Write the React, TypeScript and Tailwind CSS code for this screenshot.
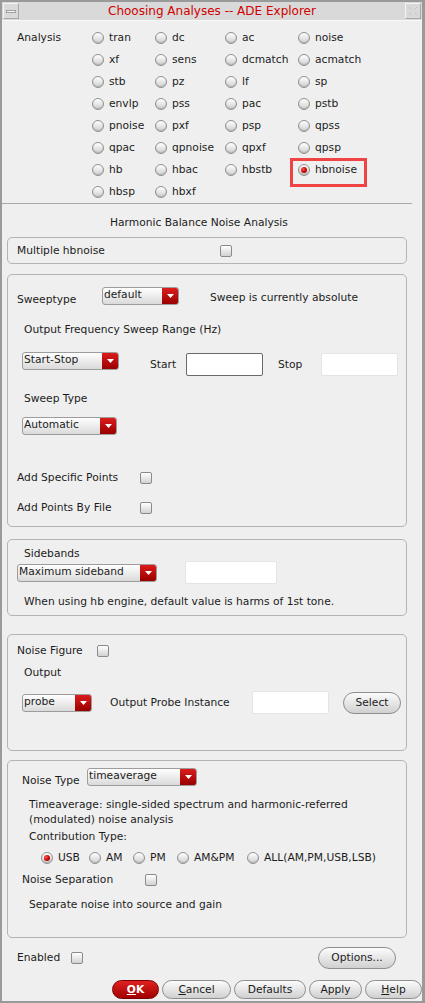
import React from 'react';

const rows: string[][] = [
  ['tran', 'dc', 'ac', 'noise'],
  ['xf', 'sens', 'dcmatch', 'acmatch'],
  ['stb', 'pz', 'lf', 'sp'],
  ['envlp', 'pss', 'pac', 'pstb'],
  ['pnoise', 'pxf', 'psp', 'qpss'],
  ['qpac', 'qpnoise', 'qpxf', 'qpsp'],
  ['hb', 'hbac', 'hbstb', 'hbnoise'],
  ['hbsp', 'hbxf'],
];

function Radio({ on }: { on?: boolean }) {
  return (
    <span className="inline-flex h-[12px] w-[12px] shrink-0 items-center justify-center rounded-full border border-[#909090] bg-linear-to-b from-white to-[#cfcfcf] shadow-[inset_0_-1px_1px_rgba(0,0,0,0.15)]">
      {on && <span className="h-[6px] w-[6px] rounded-full bg-[radial-gradient(circle_at_35%_35%,#ff5a5a,#c80000_55%,#780000)]" />}
    </span>
  );
}

function Check() {
  return <span className="inline-block h-[12px] w-[12px] shrink-0 rounded-[2px] border border-[#8a8a8a] bg-linear-to-b from-white to-[#d2d2d2]" />;
}

function Drop({ label, className }: { label: string; className: string }) {
  return (
    <div className={`flex h-[18px] shrink-0 overflow-hidden rounded-[3px] border border-[#9c9c9c] bg-linear-to-b from-white to-[#dadada] ${className}`}>
      <span className="flex-1 pl-[1px] leading-[14px]">{label}</span>
      <span className="flex w-[16px] items-center justify-center bg-linear-to-b from-[#dc1c1c] to-[#990000]">
        <svg width="7" height="4" viewBox="0 0 7 4"><path d="M0 0h7L3.5 4z" fill="#fff" /></svg>
      </span>
    </div>
  );
}

function Field({ className }: { className: string }) {
  return <div className={`h-[23px] shrink-0 rounded-[2px] bg-white ${className}`} />;
}

function Btn({ children, className }: { children: React.ReactNode; className: string }) {
  return (
    <div className={`flex shrink-0 items-center justify-center rounded-full border border-[#8e8e8e] bg-linear-to-b from-[#fcfcfc] to-[#d0d0d0] ${className}`}>
      {children}
    </div>
  );
}

export default function App() {
  return (
    <div className="flex h-[1003px] w-[425px] flex-col border-t-2 border-r-[3px] border-b-2 border-l-2 border-[#9a9a9a] bg-[#efefef] font-['DejaVu_Sans',sans-serif] text-[10.7px] leading-[14px] text-[#1c1c1c]">
      {/* title bar */}
      <div className="flex h-[19px] shrink-0 items-stretch border-b border-[#f8f8f8] bg-[#d9d9d9]">
        <div className="m-[1px] flex w-[16px] items-center justify-center border border-[#f4f4f4] border-r-[#a8a8a8] border-b-[#a8a8a8]">
          <span className="h-[3px] w-[10px] border border-[#a0a0a0] bg-[#f2f2f2]" />
        </div>
        <div className="flex flex-1 items-center justify-center text-[12px] text-[#d00000]">Choosing Analyses -- ADE Explorer</div>
        <div className="m-[1px] flex w-[16px] items-center justify-center border border-[#f4f4f4] border-r-[#a8a8a8] border-b-[#a8a8a8]">
          <svg width="10" height="10" viewBox="0 0 10 10" fill="none" stroke="#b4b4b4" strokeWidth="1" strokeDasharray="1 1">
            <path d="M1 1l3 3M9 1L6 4M1 9l3-3M9 9L6 6" />
          </svg>
        </div>
      </div>

      {/* analysis radios */}
      <div className="flex pt-[6px]">
        <div className="flex h-[22px] w-[90px] items-center pl-[15px]">Analysis</div>
        <div className="grid grid-cols-[63px_70px_73px_90px]">
          {rows.flatMap((r, i) =>
            r.map((name) => (
              <div key={`${i}-${name}`} className="relative flex h-[22px] items-center gap-[5px]">
                {name === 'hbnoise' && (
                  <span className="absolute top-[-1px] left-[-8px] h-[29px] w-[77px] border-[3px] border-[#f04444]" />
                )}
                <Radio on={name === 'hbnoise'} />
                <span>{name}</span>
              </div>
            ))
          )}
        </div>
      </div>
      <div className="h-px w-[410px] bg-[#a8a8a8]" />

      <div className="mt-[11px] pl-[108px] leading-[16px]">Harmonic Balance Noise Analysis</div>

      {/* multiple */}
      <div className="mt-[6px] ml-[5px] flex h-[27px] w-[400px] items-center rounded-[5px] border border-[#b4b4b4] pl-[9px]">
        <span className="w-[203px]">Multiple hbnoise</span>
        <Check />
      </div>

      {/* sweep */}
      <div className="mt-[10px] ml-[5px] flex h-[253px] w-[400px] flex-col rounded-[5px] border border-[#b4b4b4]">
        <div className="mt-[12px] flex h-[18px] items-start">
          <span className="mt-[6px] w-[94px] pl-[9px]">Sweeptype</span>
          <Drop label="default" className="w-[77px]" />
          <span className="mt-[4px] ml-[31px]">Sweep is currently absolute</span>
        </div>
        <div className="mt-[18px] pl-[16px]">Output Frequency Sweep Range (Hz)</div>
        <div className="mt-[15px] flex h-[25px] items-center pl-[14px]">
          <Drop label="Start-Stop" className="w-[97px] self-start" />
          <span className="ml-[31px] w-[36px]">Start</span>
          <Field className="w-[77px] border border-[#6a6a6a]" />
          <span className="ml-[15px] w-[43px]">Stop</span>
          <Field className="w-[77px] border border-[#e4e4e4]" />
        </div>
        <div className="mt-[15px] pl-[16px]">Sweep Type</div>
        <div className="mt-[11px] pl-[14px]">
          <Drop label="Automatic" className="w-[95px]" />
        </div>
        <div className="mt-[35px] flex h-[16px] items-center pl-[9px]">
          <span className="w-[123px]">Add Specific Points</span>
          <Check />
        </div>
        <div className="mt-[14px] flex h-[16px] items-center pl-[9px]">
          <span className="w-[123px]">Add Points By File</span>
          <Check />
        </div>
      </div>

      {/* sidebands */}
      <div className="mt-[12px] ml-[5px] flex h-[77px] w-[400px] flex-col rounded-[5px] border border-[#b4b4b4]">
        <div className="mt-[7px] pl-[16px]">Sidebands</div>
        <div className="flex h-[23px] items-center pl-[9px]">
          <Drop label="Maximum sideband" className="w-[140px]" />
          <Field className="ml-[28px] w-[92px] border border-[#e4e4e4]" />
        </div>
        <div className="mt-[11px] pl-[16px]">When using hb engine, default value is harms of 1st tone.</div>
      </div>

      {/* noise figure */}
      <div className="mt-[18px] ml-[5px] flex h-[117px] w-[400px] flex-col rounded-[5px] border border-[#b4b4b4]">
        <div className="mt-[8px] flex h-[16px] items-center pl-[9px]">
          <span className="w-[80px]">Noise Figure</span>
          <Check />
        </div>
        <div className="mt-[7px] pl-[16px]">Output</div>
        <div className="mt-[11px] flex h-[23px] items-center pl-[14px]">
          <Drop label="probe" className="w-[70px]" />
          <span className="ml-[18px] w-[142px]">Output Probe Instance</span>
          <Field className="w-[77px] border border-[#e4e4e4]" />
          <Btn className="ml-[14px] h-[22px] w-[58px]">Select</Btn>
        </div>
      </div>

      {/* noise type */}
      <div className="mt-[9px] ml-[5px] flex h-[178px] w-[400px] flex-col rounded-[5px] border border-[#b4b4b4]">
        <div className="mt-[7px] flex items-start">
          <span className="mt-[6px] w-[79px] pl-[14px]">Noise Type</span>
          <Drop label="timeaverage" className="w-[110px]" />
        </div>
        <div className="mt-[9px] pl-[21px] leading-[15px]">
          Timeaverage: single-sided spectrum and harmonic-referred
          <br />
          (modulated) noise analysis
        </div>
        <div className="mt-[3px] pl-[21px]">Contribution Type:</div>
        <div className="mt-[6px] flex h-[16px] items-center pl-[33px]">
          {[
            ['USB', 'w-[48px]'],
            ['AM', 'w-[44px]'],
            ['PM', 'w-[44px]'],
            ['AM&PM', 'w-[70px]'],
            ['ALL(AM,PM,USB,LSB)', 'w-[140px]'],
          ].map(([t, w], i) => (
            <div key={t} className={`flex items-center gap-[5px] ${w}`}>
              <Radio on={i === 0} />
              <span>{t}</span>
            </div>
          ))}
        </div>
        <div className="mt-[6px] flex h-[16px] items-center pl-[14px]">
          <span className="w-[123px]">Noise Separation</span>
          <Check />
        </div>
        <div className="mt-[10px] pl-[21px]">Separate noise into source and gain</div>
      </div>

      {/* bottom */}
      <div className="mt-[9px] flex h-[22px] items-center">
        <span className="w-[69px] pl-[15px]">Enabled</span>
        <Check />
        <Btn className="ml-[235px] h-[22px] w-[78px]">Options...</Btn>
      </div>
      <div className="mt-[11px] flex h-[19px] gap-[3px] pl-[110px]">
        <div className="flex h-[19px] w-[47px] items-center justify-center rounded-full border border-[#7a0000] bg-linear-to-b from-[#e02020] to-[#a00000] font-bold text-white">
          <span><span className="underline">O</span>K</span>
        </div>
        <Btn className="h-[19px] w-[69px]"><span><span className="underline">C</span>ancel</span></Btn>
        <Btn className="h-[19px] w-[72px]">Defaults</Btn>
        <Btn className="h-[19px] w-[53px]">Apply</Btn>
        <Btn className="h-[19px] w-[57px]"><span><span className="underline">H</span>elp</span></Btn>
      </div>
    </div>
  );
}
